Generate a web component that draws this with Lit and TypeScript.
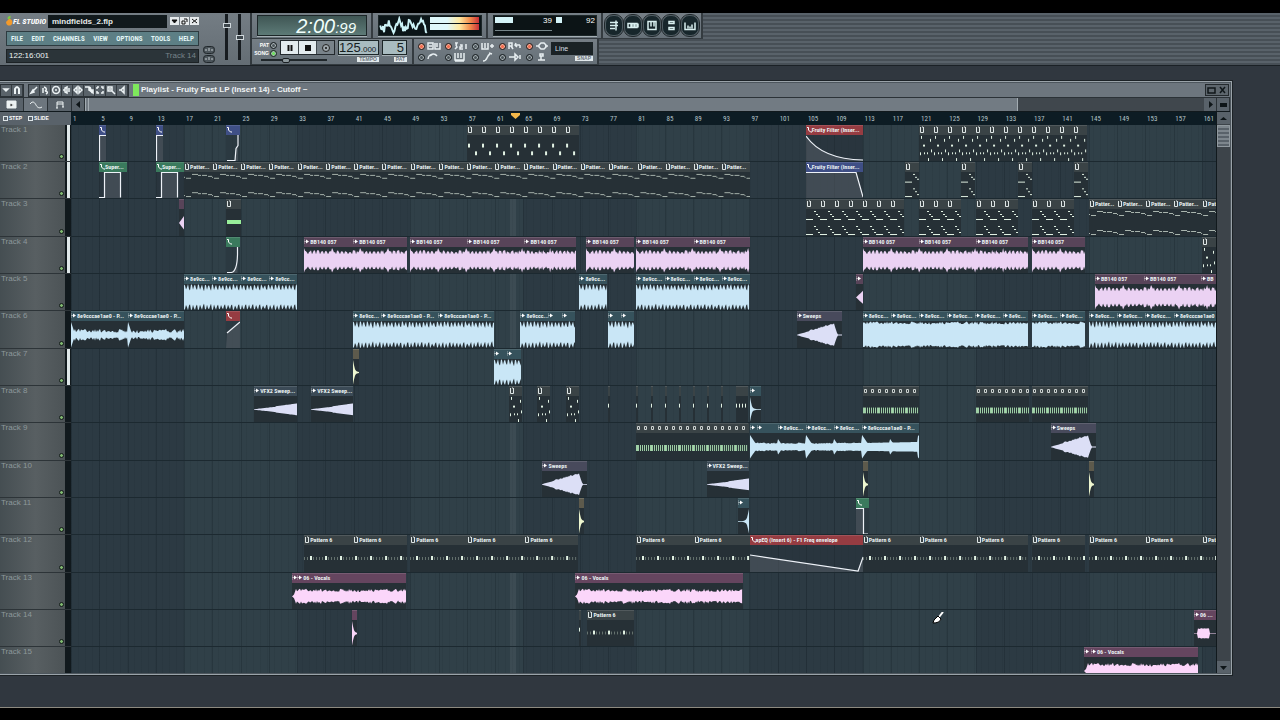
import { LitElement, html, svg, css, nothing } from "lit";
import { customElement } from "lit/decorators.js";

const LANE = 1144;
const FIRST = 71;
const BODY = 27;

type Seg = [number, string?];
interface Clip {
  x: number;
  segs: Seg[];
  tone: string;
  kind: string;
  icon?: string;
}

const rep = (n: number, w: number, text = ""): Seg[] => Array.from({ length: n }, () => [w, text] as Seg);
const clip = (x: number, segs: Seg[], tone: string, kind: string, icon = "play"): Clip => ({ x, segs, tone, kind, icon });

const LOOP = "8e9cc...";
const LOOP_LONG = "8e9cccae1ae0 - P...";
const BB = "BB140 057";
const P6 = "Pattern 6";
const pat = (x: number, segs: Seg[], kind: string) => clip(x, segs, "grey", kind, "pat");
const patters = (n: number): Seg[] => Array.from({ length: n }, (_, i) => [i % 4 === 3 ? 29 : 28, "Patter..."] as Seg);

const TRACKS: Clip[][] = [
  [
    clip(99, [[7]], "blue", "step", "env"),
    clip(156, [[7]], "blue", "step", "env"),
    clip(226, [[14]], "blue", "jump", "env"),
    pat(467, rep(8, 14), "dots"),
    clip(805, [[57, "Fruity Filter (Inser..."]], "red", "decay", "env"),
    pat(918, rep(12, 14), "notes"),
  ],
  [
    clip(99, [[28, "Super..."]], "green", "gate", "env"),
    clip(156, [[28, "Super..."]], "green", "gate", "env"),
    pat(184, patters(20), "melody"),
    clip(805, [[57, "Fruity Filter (Inser..."]], "blue", "drop", "env"),
    pat(904, [[14]], "chord"),
    pat(960, [[14]], "chord"),
    pat(1017, [[14]], "chord"),
    pat(1073, [[14]], "chord"),
  ],
  [
    clip(179, [[5]], "pink", "swell", "none"),
    pat(226, [[15]], "block"),
    pat(805, rep(7, 14), "chord"),
    pat(918, rep(3, 14), "chord"),
    pat(975, rep(3, 14), "chord"),
    pat(1031, rep(3, 14), "chord"),
    pat(1088, [...patters(4), [14, "Pat"]], "melody"),
  ],
  [
    clip(226, [[14]], "green", "curve", "env"),
    clip(304, [[49, BB], [54, BB]], "pink", "beat"),
    clip(410, [[57, BB], [57, BB], [52, BB]], "pink", "beat"),
    clip(586, [[48, BB]], "pink", "beat"),
    clip(636, [[57, BB], [56, BB]], "pink", "beat"),
    clip(862, [[56, BB], [57, BB], [52, BB]], "pink", "beat"),
    clip(1031, [[53, BB]], "pink", "beat"),
    pat(1201, [[14]], "notes"),
  ],
  [
    clip(184, [[28, LOOP], [29, LOOP], [28, LOOP], [28, LOOP]], "teal", "loud"),
    clip(579, [[28, LOOP]], "teal", "loud"),
    clip(636, [[28, LOOP], [29, LOOP], [28, LOOP], [28, LOOP]], "teal", "loud"),
    clip(855, [[7]], "pink", "swell"),
    clip(1094, [[49, BB], [57, BB], [15, "BB"]], "pink", "beat"),
  ],
  [
    clip(71, [[57, LOOP_LONG], [56, LOOP_LONG]], "teal", "thin"),
    clip(226, [[14]], "red", "ramp", "env"),
    clip(353, [[28, LOOP], [57, LOOP_LONG], [56, LOOP_LONG]], "teal", "loud"),
    clip(520, [[28, "8e9ccc..."], [14], [13]], "teal", "loud"),
    clip(608, [[13], [13]], "teal", "loud"),
    clip(796, [[45, "Sweeps"]], "mauve", "sweep"),
    clip(862, [...rep(5, 28, LOOP), [25, "8e9c..."]], "teal", "full"),
    clip(1031, [[28, LOOP], [25, "8e9c..."]], "teal", "full"),
    clip(1088, [[28, LOOP], [28, LOOP], [29, LOOP], [42, "8e9cccae1ae0"]], "teal", "loud"),
  ],
  [
    clip(353, [[6]], "olive", "hit", "none"),
    clip(494, [[13], [14]], "teal", "loud"),
  ],
  [
    clip(254, [[43, "VFX2 Sweep..."]], "slate", "rise"),
    clip(311, [[42, "VFX2 Sweep..."]], "slate", "rise"),
    pat(509, [[13]], "notes"),
    pat(537, [[13]], "notes"),
    pat(566, [[13]], "notes"),
    clip(608, [[2]], "grey", "tick", "none"),
    ...Array.from({ length: 7 }, (_, i) => clip(636 + i * 14, [[2]], "grey", "tick", "none")),
    clip(735, rep(4, 3), "grey", "tick", "none"),
    clip(749, [[11]], "teal", "hit"),
    clip(862, rep(8, 7), "grey", "comb", "sq"),
    clip(975, [...rep(7, 7), [4]], "grey", "comb", "sq"),
    clip(1031, rep(8, 7), "grey", "comb", "sq"),
  ],
  [
    clip(636, rep(16, 7), "grey", "comb", "sq"),
    clip(749, [[7], [21], [28, LOOP], [28, LOOP], [28, LOOP], [57, LOOP_LONG]], "teal", "pulse"),
    clip(1050, [[45, "Sweeps"]], "mauve", "sweep"),
  ],
  [
    clip(542, [[45, "Sweeps"]], "mauve", "sweep"),
    clip(706, [[42, "VFX2 Sweep..."]], "slate", "rise"),
    clip(862, [[5]], "olive", "hit", "none"),
    clip(1088, [[5]], "olive", "hit", "none"),
  ],
  [
    clip(579, [[5]], "olive", "hit", "none"),
    clip(737, [[11]], "teal", "back"),
    clip(855, [[13]], "green", "fall", "env"),
  ],
  [
    pat(304, [[49, P6], [54, P6]], "steps"),
    pat(410, [[57, P6], [57, P6], [54, P6]], "steps"),
    pat(636, [[57, P6], [56, P6]], "steps"),
    clip(749, [[113, "apEQ (Insert 6) - F1 Freq envelope"]], "red", "slope", "env"),
    pat(862, [[56, P6], [57, P6], [52, P6]], "steps"),
    pat(1031, [[53, P6]], "steps"),
    pat(1088, [[56, P6], [57, P6], [14, "Pat"]], "steps"),
  ],
  [
    clip(292, [[5], [109, "06 - Vocals"]], "plum", "voice"),
    clip(575, [[167, "06 - Vocals"]], "plum", "voice"),
  ],
  [
    clip(352, [[5]], "plum", "hit", "none"),
    clip(579, [[2]], "grey", "tick", "none"),
    pat(587, [[47, P6]], "steps"),
    clip(1193, [[22, "06 ..."]], "plum", "blip"),
  ],
  [clip(1083, [[7], [107, "06 - Vocals"]], "plum", "voice")],
];

const SELECTED = new Set([1, 2, 4, 7]);

const noise = (i: number) => {
  const v = Math.sin(i * 127.1 + 11.7) * 43758.5453;
  return v - Math.floor(v);
};

/** Mirrored amplitude outline around the middle of the clip body. */
function outline(w: number, amp: (x: number) => number) {
  const top: string[] = [];
  const bottom: string[] = [];
  for (let x = 0; x <= w; x += 1) {
    const a = amp(x);
    top.push(`${x},${(14 - a).toFixed(1)}`);
    bottom.unshift(`${x},${(14 + a * 0.95).toFixed(1)}`);
  }
  return top.concat(bottom).join(" ");
}

const PULSES = [13, 12, 8, 11, 13, 9, 7];

const AMPS: Record<string, (x: number, w: number) => number> = {
  loud: (x) => PULSES[x % 7] + noise(x) * 1.5 - 0.5,
  full: (x) => 10.5 + noise(x) * 3,
  beat: (x) => (x % 28 < 1 ? 13 : x % 4 === 0 ? 6.5 : 8 + noise(x) * 3),
  thin: (x) => Math.max(2 + noise(x) * 4, 13 - (x % 57) * 3),
  pulse: (x, w) => Math.max(3 + noise(x) * 1.5, (x % 56 < 8 ? 12 : 8) - (x % 28) * 1.5, x > 10 ? 2 + (x / w) * 3 : 0),
  voice: (x) => (x < 3 ? x : 4.5 + noise(x) * 3.5),
  sweep: (x, w) => (x < 38 ? (x / 38) * 11 + (x > 12 ? noise(x) * 1.5 : 0.3) : Math.max(0.4, 8 - (x - 38) * 3)),
  rise: (x, w) => 0.3 + (x / w) * (x / w > 0.5 ? 6 : 5),
  hit: (x) => Math.max(0.4, 13 / (1 + x * x * 0.7)),
  back: (x, w) => Math.max(0.4, 13 / (1 + (w - x) * (w - x) * 0.6)),
  swell: (x, w) => (x / w) * 7,
  blip: (x) => (x > 3 && x < 16 ? 4.5 + noise(x) : 0.3),
};

const LINES: Record<string, string> = {
  step: "M0.5 27V0.5H7",
  jump: "M1 26.5H9L10 14L12 11V0",
  decay: "M0 1Q16 25 57 26",
  gate: "M0 26.5H5.5V0.5H21.5V26.5",
  drop: "M0 0.5H50L57 26",
  curve: "M1 26.5H5Q11 26 11.5 8V0",
  ramp: "M1 12L14 1",
  fall: "M0 0.5H7.5V27H12",
  slope: "M0 10L108 26L113 12",
};

const NOTES: Record<string, [number, number[][]]> = {
  dots: [14, [[1, 9, 2, 4], [8, 17, 2, 4]]],
  notes: [14, [[2, 1, 1, 3], [11, 4, 1, 3], [4, 10, 2, 2], [1, 18, 1, 3], [5, 18, 1, 2], [8, 18, 1, 2], [12, 15, 1, 3], [9, 24, 1, 3]]],
  chord: [14, [[0, 10, 7, 1], [8, 2, 2, 1], [10, 5, 2, 1], [12, 7, 2, 1], [0, 25, 7, 1], [8, 17, 2, 1], [10, 20, 2, 1], [12, 23, 2, 1]]],
  melody: [28, [[0, 5, 1, 1], [2, 6, 5, 1], [8, 2, 6, 1], [14, 3, 3, 1], [18, 3, 5, 1], [24, 4, 4, 1], [0, 24, 1, 1], [2, 25, 5, 1], [8, 21, 6, 1], [14, 22, 3, 1], [18, 22, 5, 1], [24, 23, 4, 1]]],
  tick: [3, [[0, 8, 1, 4]]],
};

function body(c: Clip, w: number) {
  if (AMPS[c.kind]) return svg`<polygon class="wave" points=${outline(w, (x) => AMPS[c.kind](x, w))}></polygon>`;
  if (LINES[c.kind]) {
    const d = LINES[c.kind];
    return svg`<path class="under" d=${d + `V27H${c.kind === "gate" ? 5 : 0}Z`}></path><path class="line" d=${d}></path>`;
  }
  if (c.kind === "block") return svg`<rect class="lime" x="1" y="11" width="14" height="4"></rect>`;
  const out: unknown[] = [];
  if (c.kind === "comb") {
    for (let x = 0; x < w; x += 2) out.push(svg`<rect class="comb" x=${x} y="12" width=${x % 14 === 0 ? 2 : 1} height="6"></rect>`);
    return out;
  }
  if (c.kind === "steps") {
    for (let x = 0, i = 0; x < w; x += 3, i++) {
      const hot = i % 5 === 2;
      out.push(svg`<rect class=${hot ? "note" : "dim"} x=${x} y=${hot ? 11 : 12} width=${hot ? 2 : 1} height=${hot ? 4 : 3}></rect>`);
    }
    return out;
  }
  const [period, notes] = NOTES[c.kind];
  const cls = c.kind === "melody" ? "soft" : "note";
  for (let o = 0; o < w; o += period)
    for (const [x, y, nw, nh] of notes)
      if (o + x < w) out.push(svg`<rect class=${cls} x=${o + x} y=${y} width=${nw} height=${nh}></rect>`);
  return out;
}

const GLYPHS: Record<string, unknown> = {
  play: svg`<path d="M0 1V6M0 3.5H2" stroke="#fff" opacity=".5"></path><path d="M2 1.5L5 3.5L2 5.5Z" fill="#fff"></path>`,
  pat: svg`<path d="M1.5 1V6.5H4.5V1M3 1H4" fill="none" stroke="#dfe6e6"></path>`,
  env: svg`<path d="M1 1.5H2.5V4L4.5 6H6" fill="none" stroke="#fff"></path>`,
  sq: svg`<path d="M1.5 2.5H3.5V5.5H1.5Z" fill="none" stroke="#ccd2d0"></path>`,
};

const glyph = (name?: string) =>
  name && GLYPHS[name] ? html`<svg class="glyph" viewBox="0 0 6 8" aria-hidden="true">${GLYPHS[name]}</svg>` : nothing;

const TOOLS = [
  "M8 2L4 6M4 5L2 8L5 7Z",
  "M4 2C7 3 7 5 5 6C8 6 8 8 6 9M3 3V8",
  "M5 1.500A3.500 3.500 0 1 0 5.100 1.500M5 4V6",
  "M1 5H3V3L5 2V8L3 7V5M7 3V7",
  "M4 2L1 5L4 8ZM6 2L9 5L6 8Z",
  "M1 2H5V5H9V8L5 5M6 2L8 8",
  "M2 2H4M6 2H8V4M8 6V8H6M4 8H2V6M2 4V2",
  "M2 2H6V6H2ZM6 6L9 9M4 3V5",
  "M2 5H4L7 2V8L4 5",
];

const SWITCHES: [boolean, string][] = [
  [true, "M1 2H6V8H1ZM2 5H5M8 2V8H13V2M10 2V6"],
  [true, "M1 2H3L2 4L3 6L1 8M6 4H8V6H6V8H9M12 3V8"],
  [false, "M1 2V8H7V2M4 2V7M9 5H13M11 3V7"],
  [true, "M1 8V2H4V5H1M3 5L5 8M7 4H12M8 2L7 4L9 6M12 4V7"],
  [true, "M1 5H4M10 5H13M4 4L6 2H9L11 4V6L9 8H6L4 6Z"],
  [false, "M1 7C2 1 8 1 10 4M3 4L6 2"],
  [false, "M1 1V8H10V1M4 1V6M7 1V6M1 9H10"],
  [false, "M2 9C7 9 5 4 9 2M8 1L11 2"],
  [false, "M1 5H7M7 2V8L10 5ZM12 3V7"],
  [false, "M3 8H10M6 8V4M5 2H8V4H5Z"],
];

const VIEWS = [
  "M4 5H12M4 8H12M4 11H9M10 3V13",
  "M3 6H6V10H3ZM7 6H9V10H7ZM10 6H12V10H10ZM13 6V10",
  "M4 4H12V12H4ZM7 4V9M10 4V9",
  "M6 4H11V6H6ZM6 10H11V12H6Z",
  "M3 5V12H13V5M6 8V11M8 9V11M10 7V11",
];

@customElement("app-root")
export class AppRoot extends LitElement {
  static styles = css`
    * { box-sizing: border-box; }
    :host {
      display: flex;
      flex-direction: column;
      height: 100vh;
      overflow: hidden;
      background: #30373f;
      color: #fff;
      font-family: "Liberation Sans", sans-serif;
      font-size: 8px;
      line-height: 10px;
    }
    button, select, input { font: inherit; color: inherit; margin: 0; padding: 0; border: 0; }
    svg { display: block; }
    .letter { height: 13px; background: #000; flex: none; }
    .foot { height: 13px; background: #000; border-top: 1px solid #8d8a80; flex: none; margin-top: auto; }

    .bar { display: flex; height: 53px; flex: none; background: #6b747b; border-bottom: 1px solid #1b2126; }
    .left { display: flex; width: 252px; border-right: 2px solid #31383d; padding: 1px 4px 2px 6px; gap: 4px; background: linear-gradient(#747d84, #646d74); }
    .main { width: 193px; display: flex; flex-direction: column; gap: 3px; }
    .title { display: flex; height: 14px; align-items: center; }
    .brand { display: flex; align-items: center; width: 42px; white-space: nowrap; font: italic bold 8px "Roboto Condensed", Lato, sans-serif; color: #fff; }
    .brand svg { width: 7px; height: 12px; flex: none; }
    .file { flex: 1; background: #11191c; height: 13px; line-height: 13px; padding-left: 4px; margin-right: 2px; color: #e6eaea; font-weight: bold; font-size: 8px; }
    .win { width: 9px; height: 8px; background: #e6eaec; margin-left: 1px; }
    .menu { display: flex; height: 15px; justify-content: space-between; align-items: center; padding: 0 4px; background: #5d7f85; border: 1px solid #2d3b40; }
    .menu button { background: none; color: #e3f6f6; font: bold 7px/12px "Roboto Condensed", Lato, sans-serif; }
    .hint { display: flex; justify-content: space-between; height: 14px; line-height: 12px; padding: 0 2px; background: #2b3439; border: 1px solid #1c2225; color: #eef4f4; font-size: 8px; }
    .hint .dim { color: #77838a; }
    .knobs { display: flex; flex-direction: column; justify-content: flex-end; gap: 1px; width: 12px; }
    .knobs svg { width: 12px; height: 8px; }
    .faders { display: flex; gap: 4px; padding-left: 3px; }
    .fader { appearance: none; writing-mode: vertical-lr; direction: rtl; width: 9px; height: 46px; background: linear-gradient(90deg, transparent 3px, #171c20 3px, #171c20 6px, transparent 6px); }
    .fader::-webkit-slider-thumb { appearance: none; width: 8px; height: 5px; background: #3c454b; border: 1px solid #d0d8dc; }
    .panels { flex: 1; display: flex; flex-direction: column; background: repeating-linear-gradient(#59626a 0 2px, #474f56 2px 4px); }
    .row { display: flex; height: 26px; align-items: stretch; }
    .cell { display: flex; align-items: center; background: linear-gradient(#757e85, #667078); border-right: 2px solid #343b40; border-bottom: 1px solid #343b40; padding: 0 4px 0 5px; }
    .lcd { border: 1px solid #1c2628; box-shadow: 0 1px #a5afb4; }
    .time { width: 110px; height: 21px; background: linear-gradient(#3f5654, #5d7a77); display: flex; align-items: baseline; justify-content: flex-end; padding-right: 10px; font: italic 20px/20px "Liberation Sans", sans-serif; color: #f2fffc; }
    .time small { font-size: 15px; }
    .osc { width: 104px; height: 21px; background: #0b1518; display: flex; align-items: center; gap: 1px; }
    .osc svg { width: 50px; height: 19px; }
    .vu { width: 49px; height: 13px; display: flex; flex-direction: column; gap: 1px; margin-bottom: 4px; }
    .vu i { flex: 1; background: linear-gradient(90deg, #dff8fb 35%, #ffe9a0 60%, #f28b4c 82%, #c9303a); }
    .cpu { width: 104px; height: 21px; background: #0c1416; display: grid; grid-template-columns: 57px 1fr; grid-template-rows: 9px 9px; column-gap: 4px; padding: 0 1px; font-size: 8px; line-height: 9px; }
    .cpu div { display: flex; justify-content: space-between; }
    .cpu i { width: 18px; height: 6px; background: #d5f4f8; margin-top: 1px; }
    .cpu div:nth-child(2) i { width: 6px; }
    .cpu b { font-weight: normal; }
    .cpu hr { margin: 5px 0 0; border: 0; height: 1px; background: #77868a; }
    .views { gap: 1px; padding: 0 2px; }
    .view { width: 18px; height: 21px; border-radius: 8px; background: #17262b; border: 1px solid #4f5c62; outline: 1px solid #20282c; }
    .view svg { width: 16px; height: 17px; stroke: #d9f0f0; fill: none; stroke-width: 1.5; }

    .transport { width: 162px; display: grid; grid-template-columns: 21px 55px 41px 25px; column-gap: 3px; padding: 1px 4px; align-items: start; }
    .modes { font: bold 5px/8px "Liberation Sans", sans-serif; display: flex; flex-direction: column; align-items: flex-end; padding-top: 1px; }
    .mode { display: flex; align-items: center; gap: 1px; height: 8px; background: none; }
    .led { width: 7px; height: 7px; flex: none; border-radius: 50%; border: 1px solid #1a2023; background: #4c565b; box-shadow: inset 0 0 0 1px #aab4b8; }
    .led.green { background: #6ee85b; }
    .led.on { background: #f2674a; box-shadow: inset 0 0 0 1px #f9b39a; }
    .play { display: flex; height: 15px; border: 1px solid #23292d; }
    .play button { flex: 1; background: #e3ebee; border-right: 1px solid #40484d; display: grid; place-items: center; }
    .play button:last-child { background: #79838a; border-right: 0; }
    .play svg { width: 10px; height: 10px; }
    .wide { grid-column: 1 / 3; }
    .song { appearance: none; display: block; width: 66px; height: 6px; margin-left: 5px; background: linear-gradient(transparent 2px, #20272b 2px, #20272b 4px, transparent 4px); }
    .song::-webkit-slider-thumb { appearance: none; width: 8px; height: 5px; border: 1px solid #1b2023; background: #8e989d; border-radius: 2px; }
    .num { height: 15px; background: #a9bcc0; color: #15201f; text-align: right; padding-right: 2px; font-size: 13px; line-height: 14px; }
    .num small { font-size: 8px; }
    .tag { justify-self: end; background: #e2e9ec; color: #6b747b; font: bold 5px/5px "Liberation Sans", sans-serif; padding: 0 2px; }
    .switches { width: 185px; padding: 0 4px; gap: 1px; justify-content: space-between; }
    .grid { display: grid; grid-template-columns: repeat(5, 24px); grid-template-rows: 10px 10px; column-gap: 3px; row-gap: 1px; }
    .switch { display: flex; align-items: center; gap: 2px; background: none; }
    .switch svg { width: 14px; height: 10px; fill: none; stroke: #e7eef1; stroke-width: 1.5; }
    .snap { display: flex; flex-direction: column; align-items: flex-end; gap: 1px; }
    .snap select { appearance: none; width: 42px; height: 13px; background: #1a2225; padding-left: 4px; font-size: 7px; color: #d6dfe2; border-radius: 0; }

    .playlist { margin-top: 15px; margin-right: 48px; border: 1px solid #9aa3a9; border-left: 0; outline: 1px solid #1c2226; height: 594px; flex: none; display: flex; flex-direction: column; background: #4d565d; padding: 1px 1px 1px 0; }
    .head { display: flex; height: 15px; align-items: center; background: #6d767e; border-bottom: 1px solid #2b3237; padding: 0 1px 0 0; font-size: 8px; font-weight: bold; }
    .tools { display: flex; margin-right: 4px; border: 1px solid #2b3237; height: 13px; }
    .tools button { width: 11px; height: 11px; background: #5a636a; border-right: 1px solid #343b40; }
    .tools svg { width: 10px; height: 10px; fill: none; stroke: #edf3f5; stroke-width: 1.500; }
    .jack { width: 6px; height: 12px; background: #7ee85c; margin-right: 2px; }
    .head h1 { margin: 0; font: inherit; flex: 1; color: #f0f4f5; }
    .pair { display: flex; border: 1px solid #23292d; }
    .pair button { width: 11px; height: 10px; background: #5d666d; display: grid; place-items: center; }
    .pair svg { width: 9px; height: 8px; fill: none; stroke: #10171a; stroke-width: 1.500; }
    .scroll { display: flex; height: 14px; border-bottom: 1px solid #11191d; background: #3a4146; }
    .tab { width: 24px; background: #59626a; border-right: 1px solid #2b3237; display: grid; place-items: center; }
    .tab.sel { background: #6d767e; }
    .tab svg { width: 12px; height: 10px; fill: none; stroke: #eef3f4; }
    .arrow { width: 13px; background: #59626a; border-right: 1px solid #2b3237; display: grid; place-items: center; }
    .arrow svg { width: 7px; height: 7px; fill: #0e1518; }
    .thumb { flex: 5; background: #727b83; border: 1px solid #a3acb2; border-width: 0 1px; box-shadow: inset 2px 0 #727b83, inset 3px 0 #a3acb2; }
    .rest { flex: 1; background: #40474d; }
    .ruler { display: flex; height: 13px; background: #0d1c24; flex: none; }
    .opts { width: 71px; background: #59626a; font: bold 5px/13px "Liberation Sans", sans-serif; display: flex; gap: 6px; padding-left: 3px; }
    .opts label { display: flex; align-items: center; gap: 1px; }
    .opts input { appearance: none; width: 5px; height: 5px; border: 1px solid #dfe6e9; }
    .nums { flex: 1; display: flex; position: relative; overflow: hidden; font: 7px/14px "Roboto Condensed", Lato, sans-serif; color: #b6c4c9; }
    .nums span { flex: none; padding-left: 2px; }
    .mark { position: absolute; top: 1px; width: 9px; height: 6px; fill: #f5b84a; }
    .view-area { display: flex; flex: 1; min-height: 0; }
    .tracks { flex: 1; display: grid; grid-template-rows: repeat(5, 37px 37px 38px); overflow: hidden; min-width: 0; background: #2d3b44; }
    .track { display: flex; }
    .label { width: 71px; flex: none; display: flex; justify-content: space-between; align-items: flex-end; border-bottom: 1px solid #2d3438; padding: 0 7px 2px 1px; color: #8d989b;
      background: linear-gradient(90deg, #454e52, #585f62 50%, #4c5356 92%, #11191d 92%); }
    .label span { align-self: flex-start; }
    .label.on { background: linear-gradient(90deg, #454e52, #585f62 50%, #4c5356 92%, #11191d 92% 95%, #dfe7e8 95% 98%, #11191d 98%); }
    .led-btn { width: 5px; height: 5px; border-radius: 50%; background: #7fb870; border: 1px solid #12181a; }
    .lane { flex: 1; position: relative; border-bottom: 1px solid #1c2930; overflow: hidden;
      background:
        linear-gradient(rgba(255,255,255,.06), rgba(255,255,255,.06)) 38.500% 0 / 6px 100% no-repeat,
        repeating-linear-gradient(90deg, rgba(10,20,26,.22) 0 1px, transparent 1px 2.469%),
        repeating-linear-gradient(90deg, rgba(10,20,26,.07) 0 1px, transparent 1px 7px),
        repeating-linear-gradient(90deg, #2c3a43 0 9.876%, #304048 9.876% 19.753%); }
    .clip { position: absolute; top: 0; bottom: 0; display: flex; flex-direction: column; overflow: hidden; background: #263036; }
    .clip.env-body { background: rgba(38,48,54,.4); }
    .segs { display: flex; height: 10px; flex: none; }
    .seg { display: flex; overflow: hidden; white-space: nowrap; min-width: 0; flex-basis: 0; border-top: 1px solid rgba(255,255,255,.12); font: bold 6px/8px "Roboto Condensed", Lato, sans-serif; color: #e9f0f1; }
    .glyph { width: 6px; height: 8px; flex: none; }
    .body { flex: 1; width: 100%; min-height: 0; }
    .grey .segs { background: #3a4346; }
    .blue .segs { background: #3f4f86; }
    .red .segs { background: #963c42; }
    .green .segs { background: #3a7a5d; }
    .pink .segs { background: #584459; }
    .teal .segs { background: #36525c; }
    .mauve .segs { background: #484a5c; }
    .slate .segs { background: #3b4a56; }
    .olive .segs { background: #5d5a4c; }
    .plum .segs { background: #65455f; }
    .wave { fill: #c9e6f6; }
    .pink .wave { fill: #ebd2f3; }
    .mauve .wave, .slate .wave { fill: #dcdff6; }
    .olive .wave { fill: #eef7d0; }
    .plum .wave { fill: #fbd6fa; }
    .line { fill: none; stroke: #eef2f8; stroke-width: 1.200; }
    .under { fill: #8d9096; opacity: .25; }
    .note { fill: #e2f2e4; }
    .soft { fill: #a9b5ae; }
    .dim { fill: #66736f; }
    .lime { fill: #98ee9a; }
    .comb { fill: #9fd0a6; }
    .vscroll { width: 14px; flex: none; display: flex; flex-direction: column; background: #3d444a; border-left: 1px solid #11191d; margin-top: -13px; }
    .vscroll .arrow { width: 13px; height: 12px; border: 0; flex: none; }
    .vthumb { height: 22px; margin-top: 1px; background: repeating-linear-gradient(#7d868d 0 2px, #59626a 2px 4px); border: 1px solid #90999f; }
    .gap { flex: 1; }
    .pad { width: 14px; background: #59626a; }
    .cursor { position: absolute; left: 932px; top: 612px; width: 12px; height: 12px; }
  `;

  private clip(c: Clip) {
    const w = c.segs.reduce((s, g) => s + g[0], 0);
    return html`<div class="clip ${c.tone} ${LINES[c.kind] ? "env-body" : ""}"
      style="left:${((c.x - FIRST) / LANE) * 100}%;width:${(w / LANE) * 100}%">
      <div class="segs">${c.segs.map(([sw, text]) => html`<div class="seg" style="flex-grow:${sw}">${glyph(c.icon)}${text}</div>`)}</div>
      <svg class="body" viewBox="0 0 ${w} ${BODY}" preserveAspectRatio="none" aria-hidden="true">${body(c, w)}</svg>
    </div>`;
  }

  private toolbar() {
    let scope = "M0 10";
    for (let x = 1; x < 50; x++) scope += `L${x} ${(10 + Math.sin(x * 0.55) * 4 + (noise(x) - 0.5) * 8).toFixed(1)}`;
    return html`<header class="bar">
      <div class="left">
        <div class="main">
          <div class="title">
            <div class="brand"><svg viewBox="0 0 8 12"><path d="M3 4C6 3 8 6 7 9C5 13 0 11 0 7Z" fill="#f39a2a"></path><path d="M2 4C1 1 4 0 5 0C6 2 5 4 2 4Z" fill="#7fc843"></path></svg>FL STUDIO</div>
            <div class="file">mindfields_2.flp</div>
            ${["M2 3H7L4.500 6Z", "M2 4H5V7H2ZM4 2H7V5", "M2 2L7 6M7 2L2 6"].map(
              (d, i) => html`<button class="win" aria-label=${["Minimise", "Restore", "Close"][i]}><svg viewBox="0 0 9 8"><path d=${d} fill=${i ? "none" : "#111"} stroke="#111"></path></svg></button>`
            )}
          </div>
          <nav class="menu">${["FILE", "EDIT", "CHANNELS", "VIEW", "OPTIONS", "TOOLS", "HELP"].map((m) => html`<button>${m}</button>`)}</nav>
          <div class="hint"><span>122:16:001</span><span class="dim">Track 14</span></div>
        </div>
        <div class="knobs">
          ${[0, 1].map(() => html`<svg viewBox="0 0 12 8"><rect x="0.500" y="0.500" width="11" height="7" rx="3" fill="#4c555b" stroke="#20272b"></rect><path d="M3 5V3M6 5V2M9 5V3" stroke="#c4cdd1"></path></svg>`)}
        </div>
        <div class="faders">
          <input class="fader" type="range" aria-label="Main volume" value="78" />
          <input class="fader" type="range" aria-label="Main pitch" value="50" />
        </div>
      </div>
      <div class="panels">
        <div class="row">
          <div class="cell"><div class="lcd time">2:00<small>:99</small></div></div>
          <div class="cell"><div class="lcd osc"><svg viewBox="0 0 50 20"><path d=${scope} fill="none" stroke="#cdf4f8" stroke-width="2"></path></svg><div class="vu"><i></i><i></i></div></div></div>
          <div class="cell"><div class="lcd cpu"><div><i></i><b>39</b></div><div><i></i><b>92</b></div><hr /></div></div>
          <div class="cell views">${VIEWS.map((d, i) => html`<button class="view" aria-label=${["Playlist", "Step sequencer", "Piano roll", "Browser", "Mixer"][i]}><svg viewBox="0 0 16 16"><path d=${d}></path></svg></button>`)}</div>
        </div>
        <div class="row">
          <div class="cell transport">
            <div class="modes"><button class="mode">PAT<span class="led"></span></button><button class="mode">SONG<span class="led green"></span></button></div>
            <div class="play">
              <button aria-label="Pause"><svg viewBox="0 0 10 10"><path d="M3.500 2V8M6.500 2V8" stroke="#111" stroke-width="2"></path></svg></button>
              <button aria-label="Stop"><svg viewBox="0 0 10 10"><rect x="2" y="2" width="6" height="6" fill="#111"></rect></svg></button>
              <button aria-label="Record"><svg viewBox="0 0 10 10"><circle cx="5" cy="5" r="3.500" fill="#9ea7ac" stroke="#222"></circle><circle cx="5" cy="5" r="1" fill="#111"></circle></svg></button>
            </div>
            <div class="lcd num">125<small>.000</small></div>
            <div class="lcd num">5</div>
            <div class="wide"><input class="song" type="range" aria-label="Song position" value="36" /></div>
            <span class="tag">TEMPO</span><span class="tag">PAT</span>
          </div>
          <div class="cell switches">
            <div class="grid">${SWITCHES.map(([on, d], i) => html`<button class="switch" aria-label="Option ${i + 1}"><span class="led ${on ? "on" : ""}"></span><svg viewBox="0 0 14 10"><path d=${d}></path></svg></button>`)}</div>
            <div class="snap"><select aria-label="Snap"><option>Line</option></select><span class="tag">SNAP</span></div>
          </div>
        </div>
      </div>
    </header>`;
  }

  render() {
    return html`<div class="letter"></div>
      ${this.toolbar()}
      <section class="playlist">
        <div class="head">
          <div class="tools">
            <button aria-label="Menu"><svg viewBox="0 0 10 10"><path d="M3 4H7L5 6Z"></path></svg></button>
            <button aria-label="Magnet"><svg viewBox="0 0 10 10"><path d="M3 9V4Q5 0 7 4V9" stroke-width="2"></path></svg></button>
          </div>
          <div class="tools">${TOOLS.map((d, i) => html`<button aria-label="Tool ${i + 1}"><svg viewBox="0 0 10 10"><path d=${d}></path></svg></button>`)}</div>
          <span class="jack"></span>
          <h1>Playlist - Fruity Fast LP (Insert 14) - Cutoff ~</h1>
          <div class="pair">
            <button aria-label="Maximise"><svg viewBox="0 0 9 8"><path d="M1 2H8V7H1Z"></path></svg></button>
            <button aria-label="Close"><svg viewBox="0 0 9 8"><path d="M2 1L7 7M7 1L2 7"></path></svg></button>
          </div>
        </div>
        <div class="scroll">
          <button class="tab" aria-label="Clips"><svg viewBox="0 0 12 10"><path d="M1 1H10V8H1Z" fill="#eef3f4"></path><path d="M4 3L8 5L4 7Z" fill="#222"></path></svg></button>
          <button class="tab sel" aria-label="Automation"><svg viewBox="0 0 12 10"><path d="M0 4C3 0 5 3 6 5S9 9 12 7"></path></svg></button>
          <button class="tab" aria-label="Patterns"><svg viewBox="0 0 12 10"><path d="M3 8V2H9V7M2 8H4M8 7H10M3 4H9"></path></svg></button>
          <button class="arrow" aria-label="Scroll left"><svg viewBox="0 0 7 7"><path d="M5 0V7L1 3.500Z"></path></svg></button>
          <div class="thumb"></div>
          <div class="rest"></div>
          <button class="arrow" aria-label="Scroll right"><svg viewBox="0 0 7 7"><path d="M2 0V7L6 3.500Z"></path></svg></button>
          <button class="arrow" aria-label="Zoom"><svg viewBox="0 0 7 7"><rect y="2" width="7" height="4"></rect></svg></button>
        </div>
        <div class="ruler">
          <div class="opts"><label><input type="checkbox" />STEP</label><label><input type="checkbox" />SLIDE</label></div>
          <div class="nums">
            ${Array.from({ length: 41 }, (_, i) => html`<span style="width:${400 / 162}%">${i * 4 + 1}</span>`)}
            <svg class="mark" style="left:${(440 / LANE) * 100}%" viewBox="0 0 9 6"><path d="M0 0H9V2L4.500 6L0 2Z"></path></svg>
          </div>
          <div class="pad"></div>
        </div>
        <div class="view-area">
          <div class="tracks">
            ${TRACKS.map(
              (clips, i) => html`<div class="track">
                <div class="label ${SELECTED.has(i + 1) ? "on" : ""}"><span>Track ${i + 1}</span><button class="led-btn" aria-label="Mute track ${i + 1}"></button></div>
                <div class="lane">${clips.map((c) => this.clip(c))}</div>
              </div>`
            )}
          </div>
          <div class="vscroll">
            <button class="arrow" aria-label="Scroll up"><svg viewBox="0 0 7 7"><path d="M0 5H7L3.500 2Z"></path></svg></button>
            <div class="vthumb"></div>
            <div class="gap"></div>
            <button class="arrow" aria-label="Scroll down"><svg viewBox="0 0 7 7"><path d="M0 2H7L3.500 6Z"></path></svg></button>
          </div>
        </div>
      </section>
      <svg class="cursor" viewBox="0 0 12 12" aria-hidden="true"><path d="M11 0L7 5" stroke="#fff" stroke-width="2"></path><path d="M2 8L6 4L9 7C8 10 5 11 1 11Z" fill="#fff" stroke="#000"></path></svg>
      <div class="foot"></div>`;
  }
}
